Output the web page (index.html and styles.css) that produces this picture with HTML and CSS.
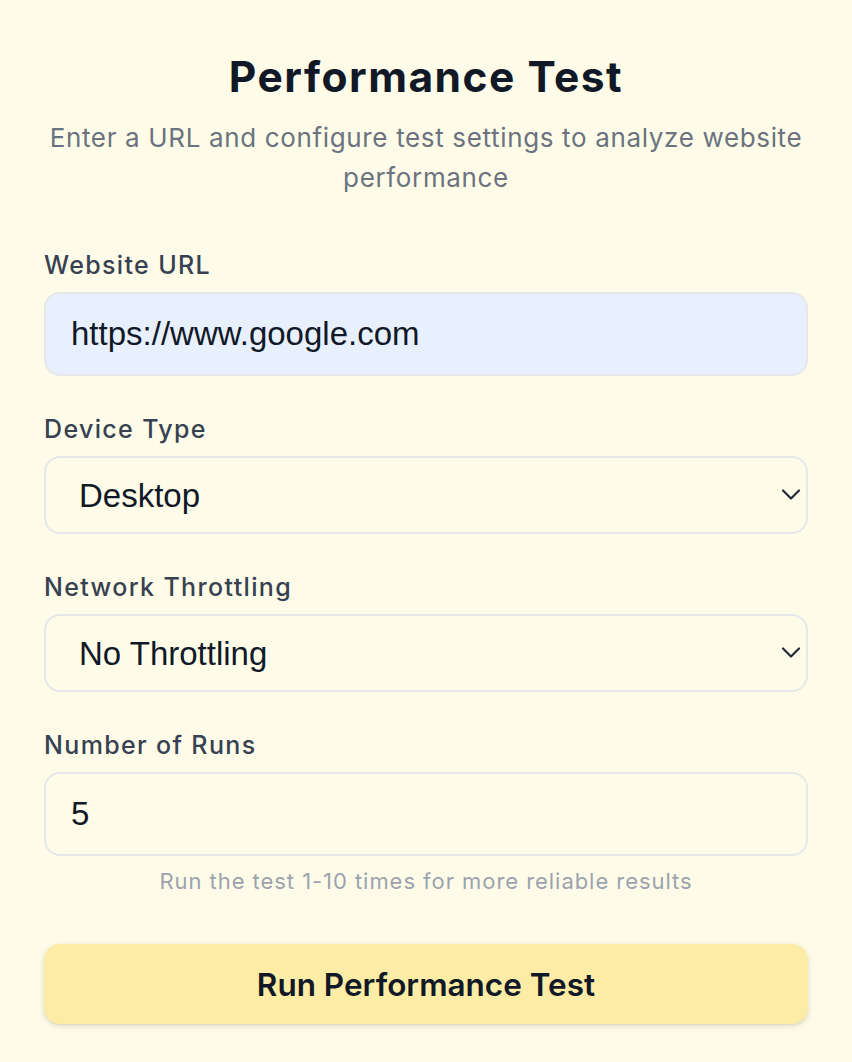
FILE: index.html
```html
<!DOCTYPE html>
<html lang="en">
<head>
<meta charset="utf-8">
<title>Performance Test</title>
<link rel="stylesheet" href="styles.css">
</head>
<body>
<main class="page">
  <header class="intro">
    <h1 class="title">Performance Test</h1>
    <p class="subtitle">Enter a URL and configure test settings to analyze website performance</p>
  </header>
  <form class="form">
    <div class="field">
      <label class="label" for="url">Website URL</label>
      <input class="control control-autofill" id="url" type="text" value="https://www.google.com">
    </div>
    <div class="field">
      <label class="label" for="device">Device Type</label>
      <div class="select-wrap">
        <select class="control control-select" id="device">
          <option>Desktop</option>
          <option>Mobile</option>
        </select>
        <svg class="chevron" viewBox="0 0 20 13" width="20" height="13" aria-hidden="true"><path d="M2 2.5 L10 10.5 L18 2.5" fill="none" stroke="#1f2937" stroke-width="2.2" stroke-linecap="round" stroke-linejoin="round"/></svg>
      </div>
    </div>
    <div class="field">
      <label class="label" for="net">Network Throttling</label>
      <div class="select-wrap">
        <select class="control control-select" id="net">
          <option>No Throttling</option>
          <option>Fast 3G</option>
        </select>
        <svg class="chevron" viewBox="0 0 20 13" width="20" height="13" aria-hidden="true"><path d="M2 2.5 L10 10.5 L18 2.5" fill="none" stroke="#1f2937" stroke-width="2.2" stroke-linecap="round" stroke-linejoin="round"/></svg>
      </div>
    </div>
    <div class="field">
      <label class="label" for="runs">Number of Runs</label>
      <input class="control" id="runs" type="text" value="5">
      <p class="hint">Run the test 1-10 times for more reliable results</p>
    </div>
    <button class="submit" type="button">Run Performance Test</button>
  </form>
</main>
</body>
</html>
```
FILE: styles.css
```css
* { box-sizing: border-box; }
html, body { margin: 0; padding: 0; }
body {
  background: #fefce8;
  font-family: Inter, "Noto Sans", sans-serif;
  color: #111827;
  width: 852px;
  height: 1062px;
  overflow: hidden;
}
.page {
  padding: 52px 44px 0 44px;
}
.intro {
  text-align: center;
}
.title {
  margin: 0;
  font-size: 42.5px;
  line-height: 50px;
  font-weight: 700;
  color: #111827;
  letter-spacing: 1.5px;
}
.subtitle {
  margin: 16px 0 0 0;
  font-size: 26px;
  line-height: 40px;
  color: #6b7280;
  font-weight: 400;
  letter-spacing: 0.65px;
}
.form {
  margin-top: 50px;
  display: flex;
  flex-direction: column;
}
.field {
  display: flex;
  flex-direction: column;
  margin-bottom: 36px;
}
.field:last-of-type { margin-bottom: 49px; }
.label {
  font-size: 25px;
  line-height: 35px;
  font-weight: 500;
  color: #374151;
  margin-bottom: 9px;
  letter-spacing: 1.35px;
}
.control {
  width: 100%;
  height: 84px;
  border: 2px solid #e5e7eb;
  border-radius: 16px;
  background: #fefce8;
  padding: 0 25px;
  font-family: "Liberation Sans", Arial, sans-serif;
  font-size: 33px;
  color: #111827;
  outline: none;
  margin: 0;
}
.control-autofill {
  background: #e8f0fe;
}
.select-wrap {
  position: relative;
}
.control-select {
  -webkit-appearance: none;
  appearance: none;
  height: 78px;
  padding-left: 33px;
}
.chevron {
  position: absolute;
  right: 7px;
  top: 32px;
  pointer-events: none;
}
.hint {
  margin: 11px 0 0 0;
  text-align: center;
  font-size: 22px;
  line-height: 28px;
  color: #9ca3af;
  letter-spacing: 0.95px;
}
.submit {
  height: 80px;
  width: 100%;
  border: none;
  border-radius: 16px;
  background: #fdeca6;
  font-family: Inter, "Noto Sans", sans-serif;
  font-size: 31.5px;
  font-weight: 600;
  color: #111827;
  box-shadow: 0 2px 6px rgba(0, 0, 0, 0.12), 0 1px 2px rgba(0, 0, 0, 0.06);
}
```
